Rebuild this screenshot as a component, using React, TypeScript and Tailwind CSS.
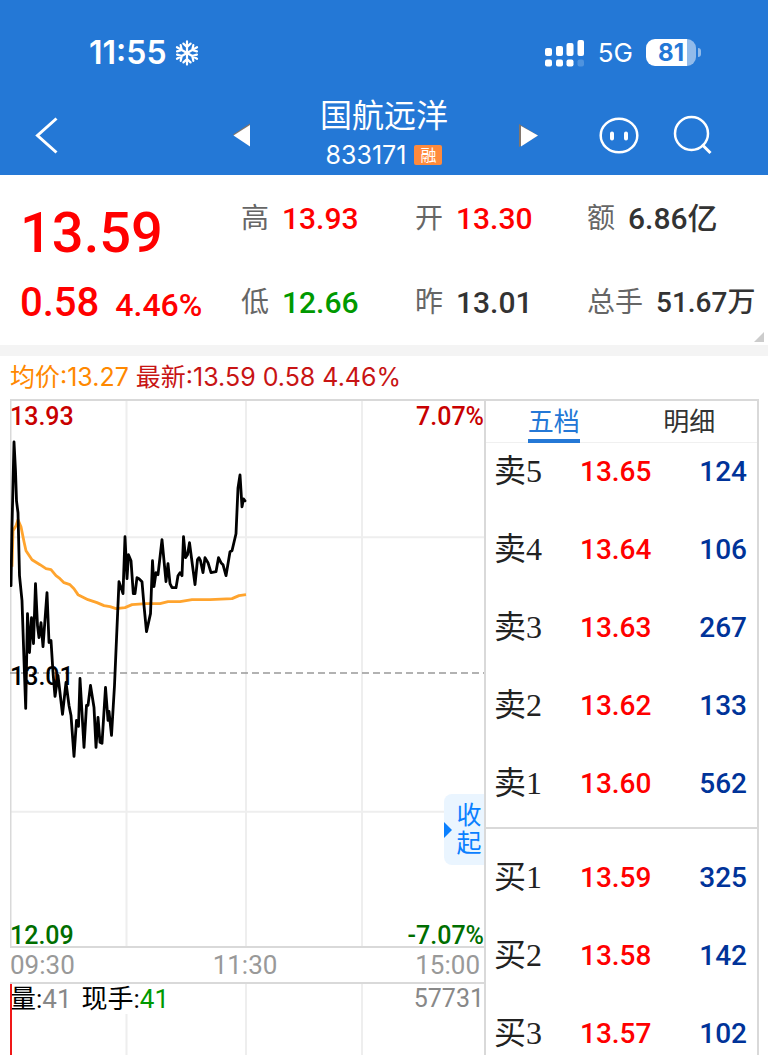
import { useState } from "react";

type Quote = {
  label: string;
  value: string;
  color: string;
  size: string;
};

type Order = {
  label: string;
  price: string;
  volume: string;
};

const quotes: Quote[] = [
  { label: "高", value: "13.93", color: "text-[#ff0000]", size: "text-[30px]" },
  { label: "开", value: "13.30", color: "text-[#ff0000]", size: "text-[30px]" },
  { label: "额", value: "6.86亿", color: "text-[#333333]", size: "text-[30px]" },
  { label: "低", value: "12.66", color: "text-[#009900]", size: "text-[30px]" },
  { label: "昨", value: "13.01", color: "text-[#333333]", size: "text-[30px]" },
  { label: "总手", value: "51.67万", color: "text-[#333333]", size: "text-[28px]" },
];

const sells: Order[] = [
  { label: "卖5", price: "13.65", volume: "124" },
  { label: "卖4", price: "13.64", volume: "106" },
  { label: "卖3", price: "13.63", volume: "267" },
  { label: "卖2", price: "13.62", volume: "133" },
  { label: "卖1", price: "13.60", volume: "562" },
];

const buys: Order[] = [
  { label: "买1", price: "13.59", volume: "325" },
  { label: "买2", price: "13.58", volume: "142" },
  { label: "买3", price: "13.57", volume: "102" },
];

const priceLine =
  "11,585 12,526 14,441 15.5,470 16.5,500 18,512 19.5,575 22,600 24,660 25.7,708 27.5,613 29.5,652 31.5,617 33.5,643 35.5,583 37.5,625 39,637 41,622 43,646 47,592 49,642 51,640 53,672 55,696 58,675 62.5,714 66,682 69,705 71,715 74,756 76.5,720 78.5,726 80,678 84,747 86.5,705 88,705 90.5,685 94,707 96,747 98,717 100,742 102,743 105.5,687 108,720 109,711 111.5,735 114.5,685 116,650 119,581 123,593 125,536 127,578 128.5,554 131,560 133.3,593 135,593 137,577 139,578 142,581 144,605 146.5,631 150.5,613 152.5,560 154,586 156,572 158,574 162,539 166,581 168,563 170,583 172,587 176,587 178,575 180,572 182,575 183.5,536 185.5,557 187.5,554 189.5,542 195,584 197.5,559 199,557 200.5,560 203,572 205,557 208,562 211,572 216,571 218.5,557 221,562 223,564 226,575 230,551 232,550 236,533 238,487 240,474 242,506 243.5,498 245,500";

const averageLine =
  "12,566 13,530 16,525 18,519 21,526 24,541 26,550 32,559 40,564 46,568 51,569 56,575 60,578 64,582 70,584 74,588 78,594 88,599 97,602 104,605 110,606 116,608 125,607 132,604 146,603 160,603 168,601 180,601 192,599 210,599 232,598 239,595 246,594";

const Snowflake = () => (
  <svg viewBox="0 0 24 26" className="w-6 h-[26px]" fill="none" stroke="white" strokeWidth="2.2" strokeLinecap="round">
    {[0, 60, 120, 180, 240, 300].map((angle) => (
      <path key={angle} d="M12 13V1.400M8.400 3.600L12 7L15.600 3.600" transform={`rotate(${angle} 12 13)`} />
    ))}
  </svg>
);

const Signal = () => (
  <svg viewBox="0 0 40 28" className="w-10 h-7" fill="white">
    <rect x="0" y="9" width="7" height="8" rx="2" />
    <rect x="11" y="7" width="7" height="10" rx="2" />
    <rect x="21.5" y="4" width="7" height="13" rx="2" />
    <rect x="32.500" y="1" width="6.500" height="16" rx="2" />
    <rect x="0" y="20.500" width="7" height="7" rx="2" />
    <rect x="11" y="20.500" width="7" height="7" rx="2" />
    <rect x="21.5" y="20.500" width="7" height="7" rx="2" />
    <rect x="32.500" y="20.500" width="6.500" height="7" rx="2" opacity="0.2" />
  </svg>
);

const Battery = () => (
  <div className="flex items-center gap-[2px]">
    <div className="w-[50px] h-[27px] rounded-[9px] overflow-hidden flex items-center justify-center bg-linear-to-r from-white from-[82%] to-[#92bbea] to-[82%] text-[#2478d6] font-bold text-[24px]">
      81
    </div>
    <div className="w-[3px] h-[9px] rounded-r-full bg-[#92bbea]" />
  </div>
);

const Header = () => (
  <header className="shrink-0 bg-[#2478d6] text-white font-['Inter','Noto_Sans_CJK_SC',sans-serif]">
    <div className="flex justify-between items-center pl-[89px] pr-[67px] pt-8 h-[73px]">
      <div className="flex items-center gap-2">
        <span className="text-[32px] leading-10 font-semibold">11:55</span>
        <Snowflake />
      </div>
      <div className="flex items-center gap-[13px]">
        <Signal />
        <span className="text-[26px] leading-8">5G</span>
        <Battery />
      </div>
    </div>
    <nav className="grid grid-cols-[1fr_308px_1fr] items-center h-[102px] pt-[22px]">
      <button aria-label="返回" className="ml-[34px] w-6 h-10">
        <svg viewBox="0 0 24 40" fill="none" stroke="white" strokeWidth="3">
          <path d="M22.5 3.5L3.5 20.5L22.5 37.5" />
        </svg>
      </button>
      <div className="flex items-center justify-between">
        <button aria-label="上一只">
          <svg viewBox="0 0 20 24" className="w-5 h-6">
            <path d="M3 11.500L20 0.500V3L5 13Z" fill="#82766c" />
            <path d="M3.500 12.500L20 2V23.500Z" fill="white" />
          </svg>
        </button>
        <div className="flex flex-col items-center">
          <h1 className="text-[32px] leading-10">国航远洋</h1>
          <div className="flex items-center gap-2">
            <span className="text-[25px] leading-[38px]">833171</span>
            <span className="bg-[#ff8a3c] rounded-[2px] px-[6px] text-[16px] leading-5">融</span>
          </div>
        </div>
        <button aria-label="下一只">
          <svg viewBox="0 0 20 24" className="w-5 h-6">
            <path d="M1 1L20 12.500L1 24Z" fill="#82766c" />
            <path d="M3 3L20 12.500L3 23.500Z" fill="white" />
          </svg>
        </button>
      </div>
      <div className="flex items-center justify-end gap-[34px] pr-[55px]">
        <button aria-label="助手">
          <svg viewBox="0 0 40 40" className="w-10 h-10" fill="none" stroke="white" strokeWidth="2.5">
            <ellipse cx="20" cy="20.5" rx="18.3" ry="16.8" />
            <path d="M13 18.500V23.500M27 18.500V23.500" strokeWidth="4" strokeLinecap="round" />
          </svg>
        </button>
        <button aria-label="搜索">
          <svg viewBox="0 0 40 40" className="w-10 h-10" fill="none" stroke="white" strokeWidth="2.5">
            <circle cx="18.5" cy="18.5" r="16.5" />
            <path d="M29 29.5L37.5 38" strokeWidth="3" />
          </svg>
        </button>
      </div>
    </nav>
  </header>
);

const Summary = () => (
  <section className="relative flex shrink-0 h-[170px] text-[#ff0000] font-medium">
    <div className="w-[241px] shrink-0 pl-5 pt-6">
      <div className="text-[56px] leading-[68px]">13.59</div>
      <div className="flex items-baseline gap-4 pt-2">
        <span className="text-[40px] leading-[56px]">0.58</span>
        <span className="text-[32px]">4.46%</span>
      </div>
    </div>
    <dl className="grid grid-cols-[174px_172px_auto] content-start gap-y-11 pt-6">
      {quotes.map((quote) => (
        <div key={quote.label} className="flex items-center gap-[13px] leading-10 whitespace-nowrap">
          <dt className="text-[28px] font-normal text-[#666666]">{quote.label}</dt>
          <dd className={`${quote.size} ${quote.color}`}>{quote.value}</dd>
        </div>
      ))}
    </dl>
    <svg viewBox="0 0 10 10" className="absolute right-1 bottom-[3px] w-[10px] h-[10px]">
      <path d="M10 0V10H0Z" fill="#cccccc" />
    </svg>
  </section>
);

const Chart = () => (
  <div className="relative shrink-0 h-[549px] border-y-2 border-[#d9d9d9]">
    <svg viewBox="10 400 474 546" preserveAspectRatio="none" className="absolute inset-0 w-full h-full" fill="none">
      <path d="M126.500 400V946M246 400V946M362 400V946M10 536.500H484M10 811.500H484" stroke="#eeeeee" strokeWidth="2" />
      <path d="M10.500 400V946" stroke="#d9d9d9" strokeWidth="2" />
      <path d="M10 672.500H484" stroke="#999999" strokeWidth="1.500" strokeDasharray="7 4" />
      <polyline points={averageLine} stroke="#ffa42e" strokeWidth="2.800" strokeLinejoin="round" />
    </svg>
    <div className="absolute inset-0 flex flex-col justify-between text-[25px] leading-5 font-medium">
      <div className="flex justify-between text-[#c80000] pt-[6px]">
        <span>13.93</span>
        <span>7.07%</span>
      </div>
      <div className="text-black">13.01</div>
      <div className="flex justify-between text-[#006e00]">
        <span>12.09</span>
        <span>-7.07%</span>
      </div>
    </div>
    <svg viewBox="10 400 474 546" preserveAspectRatio="none" className="absolute inset-0 w-full h-full" fill="none">
      <polyline points={priceLine} stroke="black" strokeWidth="2.800" strokeLinejoin="round" strokeLinecap="round" />
    </svg>
    <button className="absolute right-0 bottom-[81px] flex items-center w-10 h-[71px] rounded-l-lg bg-[#eaf5ff] text-[#0a80ff]">
      <svg viewBox="0 0 8 16" className="w-2 h-4 shrink-0">
        <path d="M0 0L8 8L0 16Z" fill="#0a80ff" />
      </svg>
      <span className="w-[26px] ml-1 text-[25px] leading-7">收起</span>
    </button>
  </div>
);

const Volume = () => (
  <div className="relative grow">
    <svg viewBox="10 0 474 72" preserveAspectRatio="none" className="absolute inset-0 w-full h-full" fill="none">
      <path d="M126.500 0V72M246 0V72M362 0V72" stroke="#eeeeee" strokeWidth="2" />
    </svg>
    <div className="relative flex justify-between text-[26px] leading-[30px]">
      <div className="flex gap-[10px] bg-white text-black">
        <span>
          量:<span className="text-[#888888]">41</span>
        </span>
        <span>
          现手:<span className="text-[#009900]">41</span>
        </span>
      </div>
      <span className="text-[25px] text-[#888888]">57731</span>
    </div>
    <div className="absolute inset-y-0 left-0 w-[2px] bg-[#f01818]" />
  </div>
);

const OrderTable = ({ orders }: { orders: Order[] }) => (
  <table className="w-full text-[28px] leading-[56px]">
    <tbody>
      {orders.map((order) => (
        <tr key={order.label} className="h-[78px] nth-5:h-[72px] align-top">
          <th scope="row" className="w-[94px] p-0 pl-2 text-left text-[32px] font-normal text-[#222222] font-['Liberation_Serif','Noto_Sans_CJK_SC',serif]">
            {order.label}
          </th>
          <td className="p-0 pt-px font-medium text-[#ff0000]">{order.price}</td>
          <td className="p-0 pt-px pr-[10px] text-right font-medium text-[#003399]">{order.volume}</td>
        </tr>
      ))}
    </tbody>
  </table>
);

const OrderBook = () => {
  const [tab, setTab] = useState("五档");
  return (
    <div className="border-t-2 border-x-2 border-[#d9d9d9]">
      <div className="grid grid-cols-2 h-[42px] border-b border-[#f0f0f0] text-[26px]">
        {["五档", "明细"].map((name) => (
          <button key={name} onClick={() => setTab(name)} className="flex justify-center">
            <span
              className={
                tab === name
                  ? "h-[42px] leading-[42px] border-b-4 border-[#2478d6] text-[#2478d6]"
                  : "h-[42px] leading-[42px] text-[#333333]"
              }
            >
              {name}
            </span>
          </button>
        ))}
      </div>
      <OrderTable orders={sells} />
      <div className="border-t-2 border-[#d9d9d9] pt-5">
        <OrderTable orders={buys} />
      </div>
    </div>
  );
};

export default function App() {
  return (
    <div className="flex flex-col h-screen overflow-hidden bg-white font-['Roboto','Noto_Sans_CJK_SC',sans-serif]">
      <Header />
      <Summary />
      <div className="h-[11px] shrink-0 bg-[#f4f4f4]" />
      <div className="flex gap-[7px] px-[10px] h-[43px] shrink-0 items-center text-[25px] text-[#c81414] font-['Inter','Noto_Sans_CJK_SC',sans-serif]">
        <span className="text-[#ff8800]">均价:13.27</span>
        <span>最新:13.59</span>
        <span>0.58</span>
        <span>4.46%</span>
      </div>
      <main className="grid grid-cols-[474fr_275fr] grow min-h-0 pl-[10px] pr-[9px]">
        <div className="flex flex-col min-h-0">
          <Chart />
          <div className="flex justify-between h-9 shrink-0 border-b-2 border-[#d9d9d9] pr-1 text-[26px] leading-[34px] text-[#999999]">
            <span>09:30</span>
            <span>11:30</span>
            <span>15:00</span>
          </div>
          <Volume />
        </div>
        <OrderBook />
      </main>
    </div>
  );
}
